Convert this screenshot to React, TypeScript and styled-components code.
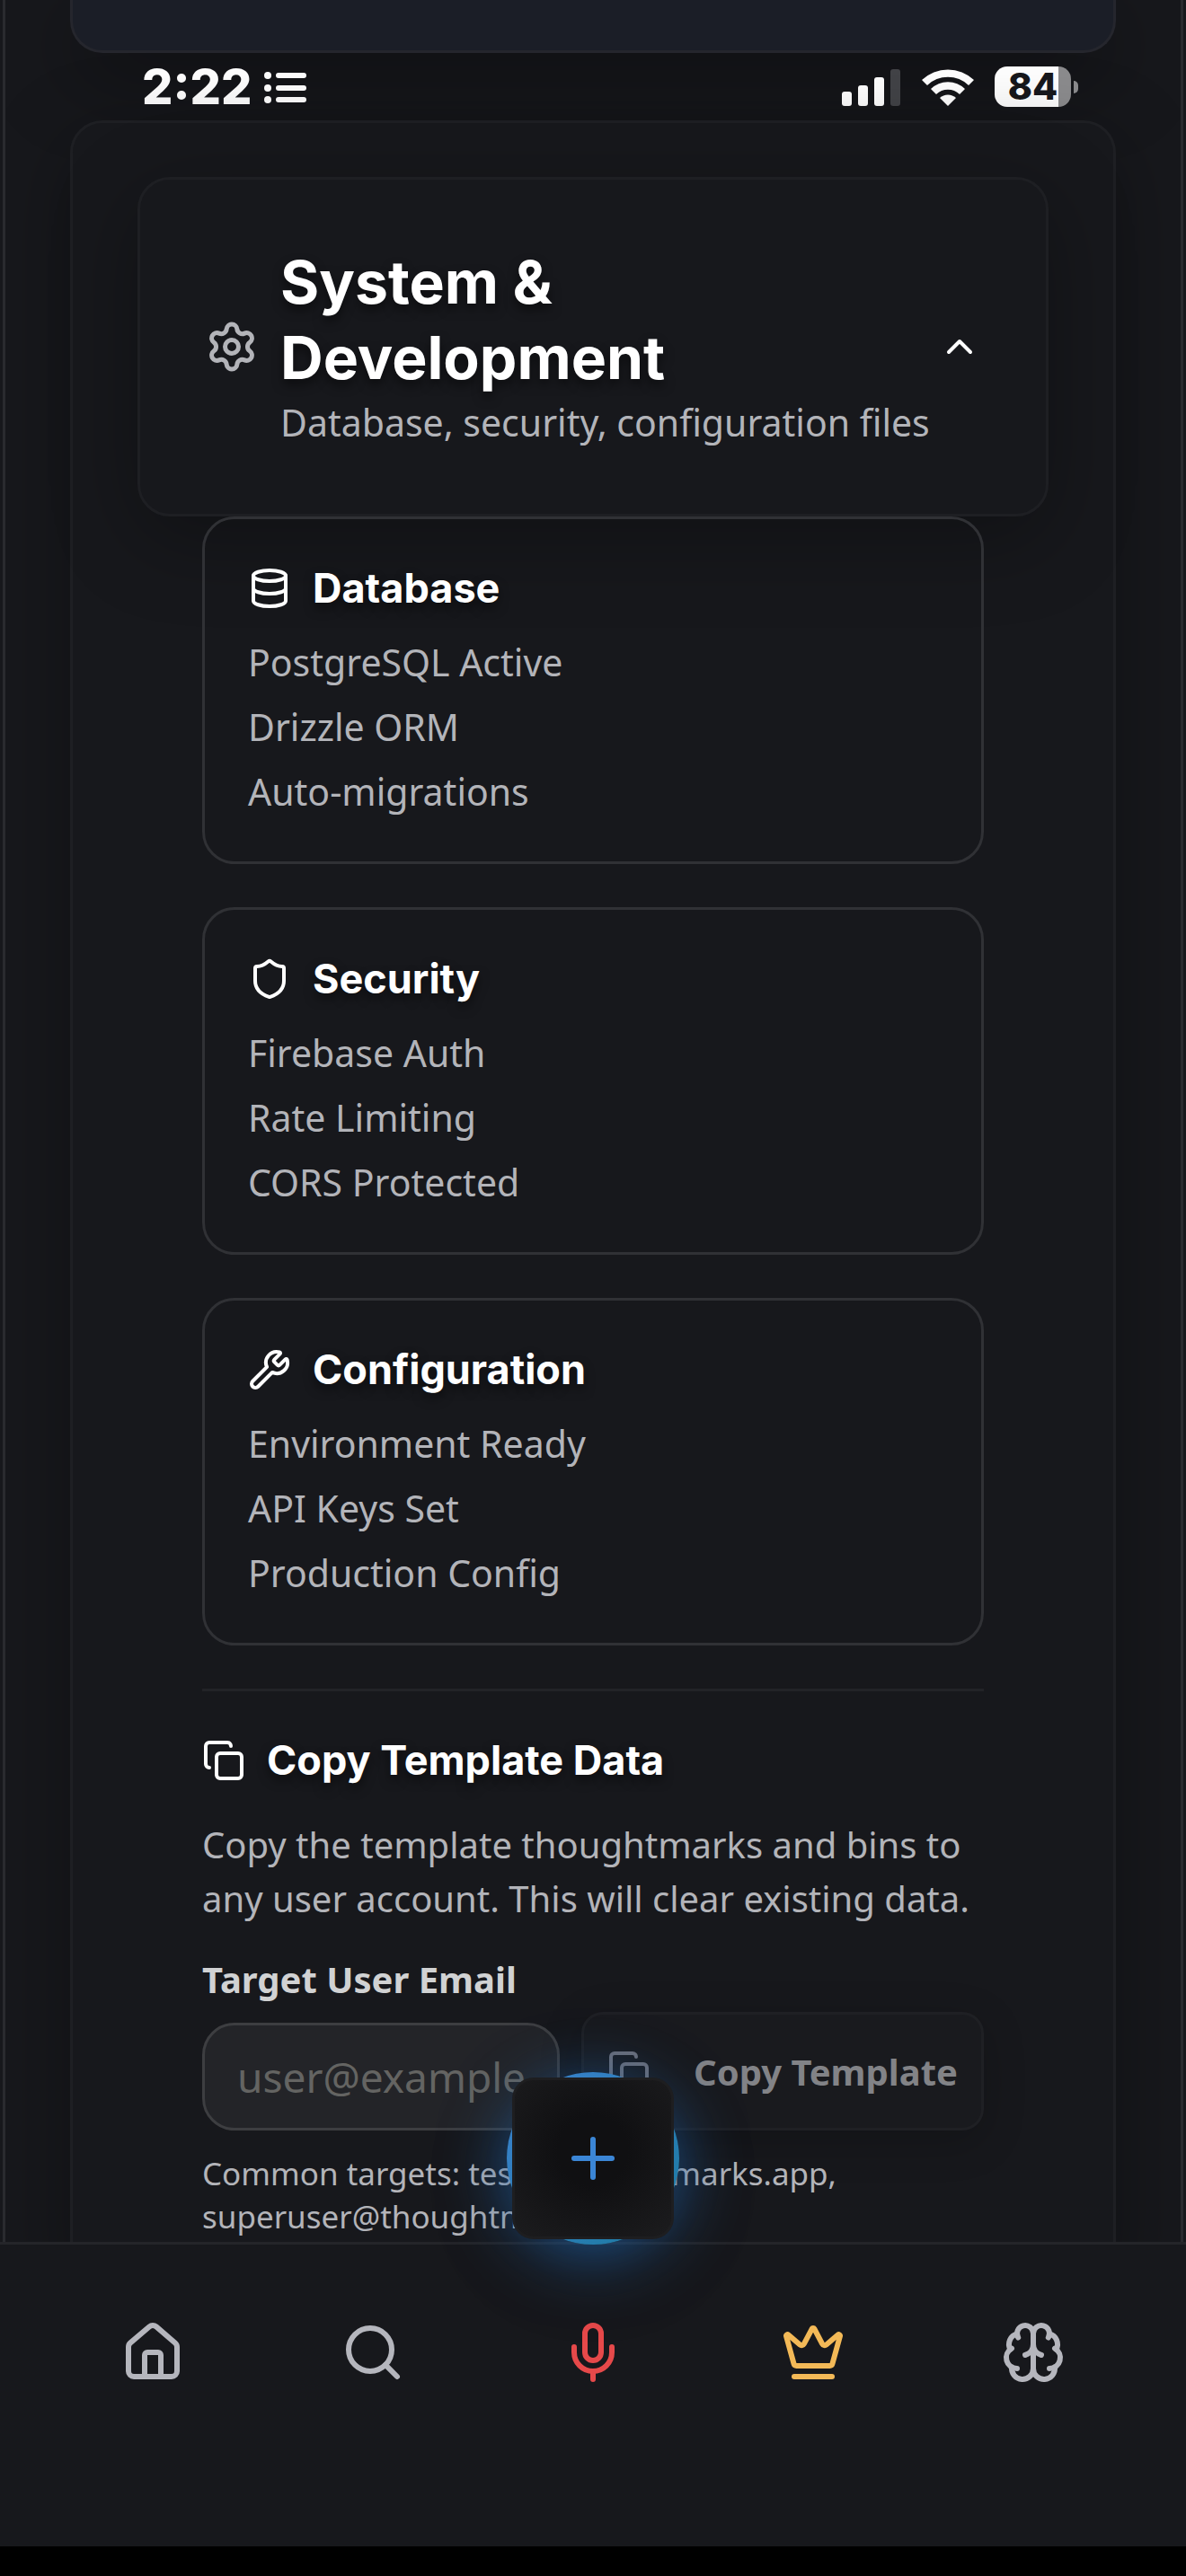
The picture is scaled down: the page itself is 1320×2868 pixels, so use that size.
import React, { useState } from 'react';
import styled, { createGlobalStyle } from 'styled-components';
import { Brain, ChevronUp, Copy, Crown, Database, House, Mic, Plus, Search, Settings, Shield, Wrench } from 'lucide-react';

const display = 'Inter, "Liberation Sans", sans-serif';
const body = '"Noto Sans", "Open Sans", sans-serif';

const GlobalStyle = createGlobalStyle`
  *, *::before, *::after { box-sizing: border-box; }
  html, body { margin: 0; background: #000; }
  h1, h2, p, ul { margin: 0; padding: 0; }
  button, input { font: inherit; }
`;

const Screen = styled.div`
  display: flex;
  flex-direction: column;
  height: 100vh;
  overflow: hidden;
  background: #17181c;
  color: #fff;
  font-family: ${body};
`;

const Scroller = styled.main`
  flex: 1;
  min-height: 0;
  overflow: hidden;
  margin: 0 3px;
  padding: 0 72px;
  border: solid #2a2b2f;
  border-width: 0 3px;
`;

const PreviousPanel = styled.section`
  height: 59px;
  border: 3px solid #25262d;
  border-top: 0;
  border-radius: 0 0 36px 36px;
  background: #1b1e27;
  box-shadow: 0 24px 96px rgba(0, 0, 0, 0.4);
`;

const StatusBar = styled.header`
  position: relative;
  display: flex;
  align-items: center;
  justify-content: space-between;
  height: 75px;
  padding: 0 42px 0 80px;
  font-family: ${display};
`;

const StatusGroup = styled.div<{ $gap: number }>`
  display: flex;
  align-items: center;
  gap: ${({ $gap }) => $gap}px;
`;

const Clock = styled.time`
  font-size: 54px;
  font-weight: 800;
  line-height: 75px;
`;

const Panel = styled.section`
  position: relative;
  padding: 60px 72px;
  border: 3px solid #1e1f23;
  border-radius: 36px;
  background: #17181c;
  box-shadow: 0 24px 96px rgba(0, 0, 0, 0.3);
`;

const SectionToggle = styled.button`
  display: flex;
  align-items: center;
  gap: 24px;
  width: 100%;
  padding: 72px;
  border: 3px solid #1e1f23;
  border-radius: 36px;
  background: #17181c;
  box-shadow: 0 24px 96px rgba(0, 0, 0, 0.3);
  color: #fff;
  text-align: left;
`;

const ToggleText = styled.span`
  display: flex;
  flex: 1;
  flex-direction: column;
  min-width: 0;
`;

const ToggleTitle = styled.span`
  font: 700 66px/84px ${display};
  text-shadow: 0 6px 12px rgba(0, 0, 0, 0.5);
`;

const ToggleSubtitle = styled.span`
  color: #b3b4b9;
  font-size: 41px;
  line-height: 60px;
  white-space: nowrap;
`;

const Content = styled.div`
  display: flex;
  flex-direction: column;
  gap: 48px;
  padding: 0 72px;
`;

const Card = styled.article`
  padding: 48px;
  border: 3px solid #303135;
  border-radius: 36px;
`;

const Title = styled.h2`
  display: flex;
  align-items: center;
  gap: 24px;
  font: 700 45px/57px ${display};
  text-shadow: 0 6px 12px rgba(0, 0, 0, 0.5);
`;

const Facts = styled.ul`
  display: flex;
  flex-direction: column;
  gap: 12px;
  margin-top: 24px;
  list-style: none;
  color: #b3b4b9;
  font-size: 41px;
  line-height: 60px;
`;

const CopySection = styled.section`
  display: flex;
  flex-direction: column;
  padding-top: 48px;
  border-top: 3px solid #222327;
`;

const Description = styled.p`
  margin: 36px 0;
  color: #b3b4b9;
  font-size: 40px;
  line-height: 60px;
`;

const FormRow = styled.form`
  display: flex;
  align-items: flex-end;
  gap: 24px;
`;

const Field = styled.div`
  display: flex;
  flex: 1;
  flex-direction: column;
  gap: 24px;
  min-width: 0;
`;

const Label = styled.label`
  color: #d1d2d3;
  font-size: 40px;
  font-weight: 700;
  line-height: 48px;
  white-space: nowrap;
`;

const EmailInput = styled.input`
  width: 100%;
  height: 120px;
  padding: 0 36px;
  border: 3px solid #3d3e41;
  border-radius: 36px;
  background: #232428;
  color: #fff;
  font-size: 46px;
  &::placeholder { color: #646462; opacity: 1; }
`;

const CopyButton = styled.button`
  display: flex;
  align-items: center;
  justify-content: center;
  gap: 48px;
  height: 132px;
  padding: 0 26px;
  border: 3px solid #1f2024;
  border-radius: 24px;
  background: #191a1e;
  box-shadow: 0 12px 48px rgba(0, 0, 0, 0.2);
  color: #828387;
  font-size: 40px;
  font-weight: 700;
  white-space: nowrap;
`;

const Hint = styled.p`
  margin-top: 24px;
  color: #b3b4b9;
  font-size: 35px;
  line-height: 48px;
`;

const NavBar = styled.nav`
  position: relative;
  display: flex;
  height: 339px;
  padding: 72px 48px 0;
  border-top: 3px solid #242529;
  background: #17181c;
`;

const NavLink = styled.a<{ $color: string }>`
  display: flex;
  flex: 1;
  align-items: center;
  justify-content: center;
  height: 96px;
  color: ${({ $color }) => $color};
`;

const HomeArea = styled.footer`
  height: 33px;
  background: #000;
`;

const FabRing = styled.div`
  position: absolute;
  bottom: 100%;
  left: calc(50% - 96px);
  display: grid;
  place-items: center;
  width: 192px;
  height: 192px;
  border-radius: 50%;
  background: linear-gradient(135deg, #3b82d0, #1c7aa0);
  box-shadow: 0 12px 72px rgba(35, 115, 200, 0.65), 0 24px 96px rgba(0, 0, 0, 0.2);
`;

const FabButton = styled.button`
  display: grid;
  place-items: center;
  width: 180px;
  height: 180px;
  padding: 0;
  border: 3px solid #1e1e20;
  border-radius: 24px;
  background: radial-gradient(circle at 50% 45%, #101012 30%, #1c1c1e 100%);
  color: #3b86d6;
`;

const ListGlyph = () => (
  <svg width="48" height="40" viewBox="0 0 48 40" fill="#fff" aria-hidden="true">
    {[3, 17, 30].map((y) => (
      <g key={y}>
        <circle cx="4" cy={y + 4} r="4" />
        <rect x="13" y={y + 1} width="34" height="6" rx="3" />
      </g>
    ))}
  </svg>
);

const SignalGlyph = () => (
  <svg width="66" height="42" viewBox="0 0 66 42" fill="#fff" aria-hidden="true">
    <rect y="26" width="11" height="16" rx="3" />
    <rect x="18" y="19" width="11" height="23" rx="3" />
    <rect x="36" y="10" width="11" height="32" rx="3" />
    <rect x="54" y="1" width="11" height="41" rx="3" fill="#424347" />
  </svg>
);

const WifiGlyph = () => (
  <svg width="58" height="42" viewBox="0 0 58 42" fill="#fff" aria-hidden="true">
    <path d="M0 13 A42 42 0 0 1 58 13 L52 19 A33 33 0 0 0 6 19 Z" />
    <path d="M10 23 A27 27 0 0 1 48 23 L42 29 A19 19 0 0 0 16 29 Z" />
    <path d="M20 33 A13 13 0 0 1 38 33 L29 42 Z" />
  </svg>
);

const Battery = styled.span`
  display: flex;
  align-items: center;
  gap: 3px;
  &::after {
    content: '';
    width: 5px;
    height: 14px;
    border-radius: 0 6px 6px 0;
    background: #8c8c8e;
  }
`;

const BatteryLevel = styled.span`
  width: 85px;
  height: 45px;
  border-radius: 14px;
  background: linear-gradient(90deg, #fff 84%, #8c8c8e 84%);
  color: #17181c;
  font-size: 41px;
  font-weight: 800;
  line-height: 45px;
  text-align: center;
`;

const cards = [
  { title: 'Database', Icon: Database, facts: ['PostgreSQL Active', 'Drizzle ORM', 'Auto-migrations'] },
  { title: 'Security', Icon: Shield, facts: ['Firebase Auth', 'Rate Limiting', 'CORS Protected'] },
  { title: 'Configuration', Icon: Wrench, facts: ['Environment Ready', 'API Keys Set', 'Production Config'] },
];

const links = [
  { label: 'Home', Icon: House, color: '#b5b6bd' },
  { label: 'Search', Icon: Search, color: '#b5b6bd' },
  { label: 'Voice', Icon: Mic, color: '#e6494a' },
  { label: 'Premium', Icon: Crown, color: '#f3b957' },
  { label: 'AI', Icon: Brain, color: '#b5b6bd' },
];

export default function App() {
  const [email, setEmail] = useState('');
  return (
    <Screen>
      <GlobalStyle />
      <Scroller>
        <PreviousPanel />
        <StatusBar>
          <StatusGroup $gap={14}>
            <Clock>2:22</Clock>
            <ListGlyph />
          </StatusGroup>
          <StatusGroup $gap={23}>
            <SignalGlyph />
            <WifiGlyph />
            <Battery><BatteryLevel>84</BatteryLevel></Battery>
          </StatusGroup>
        </StatusBar>
        <Panel>
          <SectionToggle type="button" aria-expanded="true">
            <Settings size={60} color="#b3b4b9" />
            <ToggleText>
              <ToggleTitle>System &amp;<br />Development</ToggleTitle>
              <ToggleSubtitle>Database, security, configuration files</ToggleSubtitle>
            </ToggleText>
            <ChevronUp size={48} />
          </SectionToggle>
          <Content>
            {cards.map(({ title, Icon, facts }) => (
              <Card key={title}>
                <Title><Icon size={48} />{title}</Title>
                <Facts>{facts.map((fact) => <li key={fact}>{fact}</li>)}</Facts>
              </Card>
            ))}
            <CopySection>
              <Title><Copy size={48} />Copy Template Data</Title>
              <Description>Copy the template thoughtmarks and bins to any user account. This will clear existing data.</Description>
              <FormRow onSubmit={(event) => event.preventDefault()}>
                <Field>
                  <Label htmlFor="target-email">Target User Email</Label>
                  <EmailInput
                    id="target-email"
                    type="email"
                    placeholder="user@example.com"
                    value={email}
                    onChange={(event) => setEmail(event.target.value)}
                  />
                </Field>
                <CopyButton type="submit" disabled={!email}><Copy size={48} color="#6d6f79" />Copy Template</CopyButton>
              </FormRow>
              <Hint>Common targets: test@thoughtmarks.app, superuser@thoughtmarks.app</Hint>
            </CopySection>
          </Content>
        </Panel>
      </Scroller>
      <NavBar>
        {links.map(({ label, Icon, color }) => (
          <NavLink key={label} href={`#${label.toLowerCase()}`} aria-label={label} $color={color}>
            <Icon size={72} />
          </NavLink>
        ))}
        <FabRing>
          <FabButton type="button" aria-label="Add"><Plus size={72} /></FabButton>
        </FabRing>
      </NavBar>
      <HomeArea />
    </Screen>
  );
}
